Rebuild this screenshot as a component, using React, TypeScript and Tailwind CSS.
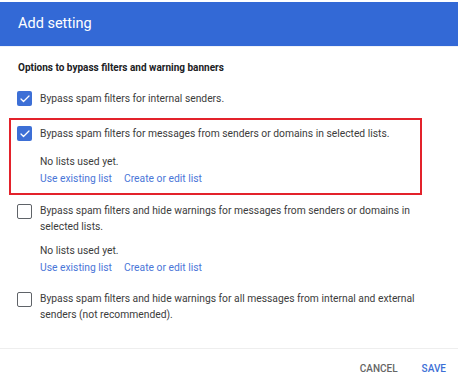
import { Check } from "lucide-react";

function Box({ checked }: { checked?: boolean }) {
  if (checked) {
    return (
      <div className="w-[15px] h-[15px] shrink-0 rounded-[2px] bg-[#3d6fd6] flex items-center justify-center">
        <Check size={12} strokeWidth={2.5} className="text-white" />
      </div>
    );
  }
  return <div className="w-[15px] h-[15px] shrink-0 rounded-[2px] border-[1.5px] border-[#5f6368]" />;
}

function Lists() {
  return (
    <div className="mt-[12px]">
      <div className="h-[16px]">No lists used yet.</div>
      <div className="h-[16px] mt-[1px] flex gap-[12px] text-[#4a76d8]">
        <span>Use existing list</span>
        <span>Create or edit list</span>
      </div>
    </div>
  );
}

export default function App() {
  return (
    <div
      className="w-[458px] h-[379px] bg-white text-[#3c3c3c] text-[10.3px] leading-[16px] overflow-hidden"
      style={{ fontFamily: "Roboto, 'Liberation Sans', sans-serif" }}
    >
      <div className="mt-[2px] h-[44px] bg-[#3369d6] flex items-center px-[18px]">
        <h1 className="text-white text-[14.5px] leading-[20px]">Add setting</h1>
      </div>
      <div className="h-[1px] bg-[#eef1f8]" />

      <div className="pt-[13px]">
        <div className="px-[18px] font-bold text-[10px] text-[#202124]">Options to bypass filters and warning banners</div>

        <div className="mt-[15px] px-[17px] flex gap-[8px] items-start">
          <Box checked />
          <div>Bypass spam filters for internal senders.</div>
        </div>

        <div className="mt-[11px] ml-[9px] w-[413px] border-2 border-[#e3222b] pl-[6px] pt-[6px] pb-[6px]">
          <div className="flex gap-[8px] items-start">
            <Box checked />
            <div>
              <div>Bypass spam filters for messages from senders or domains in selected lists.</div>
              <Lists />
            </div>
          </div>
        </div>

        <div className="mt-[8px] px-[17px] flex gap-[8px] items-start">
          <div className="mt-[1px]"><Box /></div>
          <div className="max-w-[380px]">
            <div>Bypass spam filters and hide warnings for messages from senders or domains in selected lists.</div>
            <div className="-mt-[4px]"><Lists /></div>
          </div>
        </div>

        <div className="mt-[15px] px-[17px] flex gap-[8px] items-start">
          <div className="mt-[1px]"><Box /></div>
          <div className="max-w-[380px]">
            Bypass spam filters and hide warnings for all messages from internal and external senders (not recommended).
          </div>
        </div>
      </div>

      <div className="mt-[25px] h-[1px] bg-[#eeeeee]" />
      <div className="flex justify-end items-center gap-[24px] pr-[12px] h-[40px] text-[10px] font-medium">
        <button className="text-[#666666]">CANCEL</button>
        <button className="text-[#3d6fd6]">SAVE</button>
      </div>
    </div>
  );
}
